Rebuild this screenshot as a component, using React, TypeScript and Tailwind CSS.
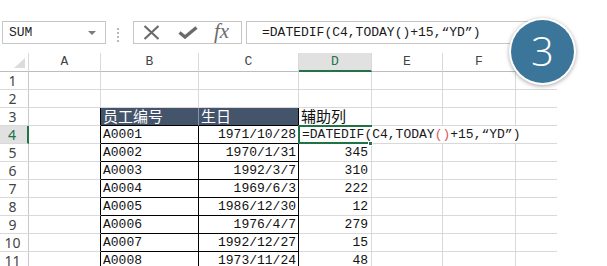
import React from "react";

const MONO = "font-['Liberation_Mono','Noto_Sans_CJK_SC',monospace]";
const CJK = "font-['Noto_Sans_CJK_SC','Noto_Sans',sans-serif]";

type Row = { n: number; b?: string; c?: string; d?: string; edit?: boolean };

const rows: Row[] = [
  { n: 1 },
  { n: 2 },
  { n: 3, b: "员工编号", c: "生日", d: "辅助列" },
  { n: 4, b: "A0001", c: "1971/10/28", edit: true },
  { n: 5, b: "A0002", c: "1970/1/31", d: "345" },
  { n: 6, b: "A0003", c: "1992/3/7", d: "310" },
  { n: 7, b: "A0004", c: "1969/6/3", d: "222" },
  { n: 8, b: "A0005", c: "1986/12/30", d: "12" },
  { n: 9, b: "A0006", c: "1976/4/7", d: "279" },
  { n: 10, b: "A0007", c: "1992/12/27", d: "15" },
  { n: 11, b: "A0008", c: "1973/11/24", d: "48" },
];

const G = "border-[#d9d9d9]";

function FormulaText({ red }: { red?: boolean }) {
  return (
    <span className={`${MONO} text-[13px] whitespace-pre text-[#1a1a1a]`}>
      =DATEDIF(C4,TODAY
      <span className={red ? "text-[#e05a5a]" : ""}>()</span>
      +15,“YD”)
    </span>
  );
}

export default function App() {
  return (
    <div className="relative w-[607px] h-[266px] bg-white overflow-hidden">
      {/* toolbar */}
      <div className="h-[53px] flex items-start pt-[21px] pl-[2px]">
        <div className="w-[104px] h-[23px] border border-[#c6c6c6] flex items-center justify-between pl-[6px] pr-[9px]">
          <span className={`${MONO} text-[13px] text-[#222]`}>SUM</span>
          <span className="w-0 h-0 border-l-[4px] border-r-[4px] border-t-[4px] border-l-transparent border-r-transparent border-t-[#7a7a7a]" />
        </div>
        <div className="ml-[11px] mt-[7px] flex flex-col gap-[2px]">
          <span className="w-[2px] h-[2px] bg-[#b8b8b8]" />
          <span className="w-[2px] h-[2px] bg-[#b8b8b8]" />
          <span className="w-[2px] h-[2px] bg-[#b8b8b8]" />
          <span className="w-[2px] h-[2px] bg-[#b8b8b8]" />
        </div>
        <div className="ml-[14px] w-[109px] h-[23px] border border-[#c6c6c6] flex items-center pl-[9px]">
          <svg width="17" height="15" viewBox="0 0 17 15">
            <path d="M1.5 1 L15.5 14 M15.5 1 L1.5 14" stroke="#6b6b6b" strokeWidth="2.2" fill="none" />
          </svg>
          <svg className="ml-[18px]" width="20" height="13" viewBox="0 0 20 13">
            <path d="M1.5 6.5 L7 11 L18.5 1.5" stroke="#6b6b6b" strokeWidth="3.4" fill="none" strokeLinejoin="miter" />
          </svg>
          <span className="ml-[16px] font-['Liberation_Serif',serif] italic text-[21px] leading-none text-[#6b6b6b] -mt-[2px]">
            fx
          </span>
        </div>
        <div className="ml-[4px] w-[300px] h-[23px] border border-[#c6c6c6] flex items-center pl-[15px]">
          <FormulaText />
        </div>
      </div>

      {/* grid */}
      <div className="w-[557px] grid grid-cols-[29px_72px_98px_100px_73px_71px_73px_41px]">
        {/* header row */}
        <div className={`h-[19px] border-r border-b border-r-[#d9d9d9] border-b-[#bdbdbd] relative`}>
          <span className="absolute right-[3px] bottom-[3px] w-0 h-0 border-l-[11px] border-t-[10px] border-l-transparent border-t-transparent border-r-0 border-b-0 [border-bottom:10px_solid_#dcdcdc]" />
        </div>
        {["A", "B", "C"].map((l) => (
          <div
            key={l}
            className={`h-[19px] border-r border-b border-r-[#d9d9d9] border-b-[#bdbdbd] flex items-center justify-center ${MONO} text-[13px] text-[#444]`}
          >
            {l}
          </div>
        ))}
        <div
          className={`h-[19px] border-r border-r-[#d9d9d9] border-b-2 border-b-[#217346] bg-[#e1e1e1] flex items-center justify-center ${MONO} text-[13px] text-[#217346]`}
        >
          D
        </div>
        {["E", "F"].map((l) => (
          <div
            key={l}
            className={`h-[19px] border-r border-b border-r-[#d9d9d9] border-b-[#bdbdbd] flex items-center justify-center ${MONO} text-[13px] text-[#444]`}
          >
            {l}
          </div>
        ))}
        <div className="h-[19px] border-b border-b-[#bdbdbd]" />

        {rows.map((r) => {
          const sel = r.n === 4;
          const head = r.n === 3;
          const body = r.n >= 4;
          return (
            <React.Fragment key={r.n}>
              {/* row header */}
              <div
                className={`h-[18px] border-b ${G} flex items-center justify-center pr-[3px] font-['Noto_Sans',sans-serif] text-[14px] ${
                  sel
                    ? "bg-[#e1e1e1] text-[#217346] border-r-2 border-r-[#217346]"
                    : "text-[#444] border-r border-r-[#c8c8c8]"
                }`}
              >
                {r.n}
              </div>
              {/* A */}
              <div
                className={`h-[18px] border-r border-b ${G} ${head || body ? "border-r-black" : ""}`}
              />
              {/* B */}
              <div
                className={`h-[18px] border-r border-b ${G} flex items-end pl-[2px] ${
                  head
                    ? `bg-[#44546a] text-white border-r-[#8893a3] border-b-black ${CJK} text-[15px] leading-[18px]`
                    : body
                    ? `border-r-black border-b-black ${MONO} text-[13px] leading-[16px] text-[#111]`
                    : ""
                }`}
              >
                {r.b}
              </div>
              {/* C */}
              <div
                className={`h-[18px] border-r border-b ${G} flex items-end ${
                  head
                    ? `bg-[#44546a] text-white border-r-black border-b-black pl-[2px] ${CJK} text-[15px] leading-[18px]`
                    : body
                    ? `border-r-black border-b-black justify-end pr-[2px] ${MONO} text-[13px] leading-[16px] text-[#111]`
                    : ""
                }`}
              >
                {r.c}
              </div>
              {/* D */}
              <div
                className={`relative h-[18px] border-r border-b ${G} flex items-end ${
                  head
                    ? `pl-[2px] ${CJK} text-[15px] leading-[18px] text-[#111]`
                    : `justify-end pr-[3px] ${MONO} text-[13px] leading-[16px] text-[#111]`
                }`}
              >
                {r.d}
                {r.edit && (
                  <>
                    <div className="absolute left-[1px] top-0 w-[226px] h-[17px] bg-white z-10 flex items-end pl-[2px] leading-[16px]">
                      <FormulaText red />
                    </div>
                    <div className="absolute -left-[1px] -top-[1px] w-[74px] h-[19px] border-l-2 border-t-2 border-b-2 border-[#217346] z-20" />
                    <div className="absolute left-[69px] top-[15px] w-[5px] h-[5px] bg-[#217346] border border-white z-30" />
                  </>
                )}
              </div>
              {/* E */}
              <div className={`h-[18px] border-r border-b ${G}`} />
              {/* F */}
              <div className={`h-[18px] border-r border-b ${G}`} />
              {/* G */}
              <div className={`h-[18px] border-b ${G}`} />
            </React.Fragment>
          );
        })}
      </div>

      {/* step badge */}
      <div className="absolute left-[509px] top-[18px] w-[67px] h-[67px] rounded-full bg-white shadow-[0_1px_4px_rgba(0,0,0,0.35)] p-[2px] z-40">
        <div className="w-full h-full rounded-full bg-[#3b7599] flex items-center justify-center">
          <span className="font-['Open_Sans',sans-serif] font-light text-[40px] leading-none text-white -mt-[2px]">3</span>
        </div>
      </div>
    </div>
  );
}
